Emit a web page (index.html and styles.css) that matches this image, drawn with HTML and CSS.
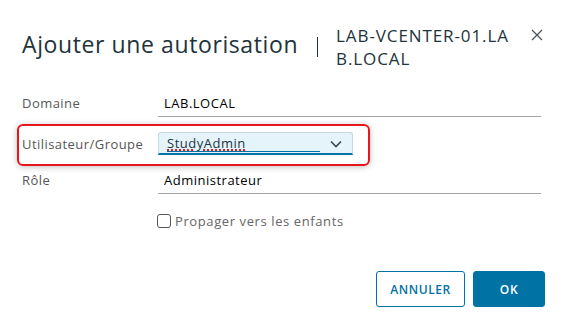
FILE: index.html
```html
<!DOCTYPE html>
<html lang="fr">
<head>
<meta charset="utf-8">
<title>Ajouter une autorisation</title>
<link rel="stylesheet" href="styles.css">
</head>
<body>
<div class="dialog">
  <div class="header">
    <h1 class="title">Ajouter une autorisation</h1>
    <span class="divider"></span>
    <div class="subtitle">LAB-VCENTER-01.LAB.LOCAL</div>
    <button class="close" aria-label="Fermer">
      <svg width="12" height="12" viewBox="0 0 12 12"><path d="M1 1L11 11M11 1L1 11" stroke="#4a5459" stroke-width="1.3" fill="none"/></svg>
    </button>
  </div>
  <div class="form">
    <div class="row row-domain">
      <label class="label">Domaine</label>
      <div class="input">LAB.LOCAL</div>
    </div>
    <div class="row row-user">
      <span class="highlight"></span>
      <label class="label label-mid">Utilisateur/Groupe</label>
      <div class="select">
        <span class="select-text"><span class="spell">StudyAdmin</span></span>
        <svg class="chevron" width="12" height="8" viewBox="0 0 12 8"><path d="M1 1.5L6 6.5L11 1.5" stroke="#3c474d" stroke-width="1.6" fill="none"/></svg>
      </div>
    </div>
    <div class="row row-role">
      <label class="label">Rôle</label>
      <div class="input">Administrateur</div>
    </div>
    <div class="check-row">
      <span class="checkbox"></span>
      <span class="check-label">Propager vers les enfants</span>
    </div>
  </div>
  <div class="footer">
    <button class="btn btn-outline">ANNULER</button>
    <button class="btn btn-primary">OK</button>
  </div>
</div>
</body>
</html>
```
FILE: styles.css
```css
html, body {
  margin: 0;
  padding: 0;
  background: #ffffff;
}
body {
  font-family: "Open Sans", "Noto Sans", sans-serif;
  color: #313131;
}
.dialog {
  width: 564px;
  height: 324px;
  box-sizing: border-box;
  padding: 0 19px 0 22px;
}
.header {
  display: flex;
  align-items: flex-start;
  padding-top: 24px;
  height: 71px;
  box-sizing: border-box;
}
.title {
  margin: 0;
  font-size: 23px;
  font-weight: 400;
  letter-spacing: 0.6px;
  line-height: 32px;
  margin-top: 4px;
  color: #21333b;
  white-space: nowrap;
}
.divider {
  width: 1px;
  height: 20px;
  background: #21333b;
  margin: 13px 18px 0 19px;
}
.subtitle {
  width: 180px;
  font-size: 17px;
  letter-spacing: 0.9px;
  line-height: 23px;
  color: #21333b;
  word-break: break-all;
}
.close {
  margin-left: auto;
  margin-top: 5px;
  margin-right: 2px;
  padding: 0;
  border: 0;
  background: none;
  width: 12px;
  height: 12px;
  display: flex;
}
.form {
  padding-top: 24px;
}
.row {
  position: relative;
  display: grid;
  grid-template-columns: 136px 1fr;
  align-items: start;
}
.label {
  font-size: 13px;
  letter-spacing: 0.45px;
  line-height: 16px;
  color: #565656;
}
.label-mid {
  align-self: center;
}
.input {
  height: 21px;
  border-bottom: 1px solid #a3a3a3;
  font-size: 13px;
  letter-spacing: 0.5px;
  color: #000;
  padding-left: 6px;
  margin-right: 4px;
  line-height: 16px;
}
.row-user {
  margin-top: 15px;
}
.row-role {
  margin-top: 17px;
}
.select {
  width: 195px;
  height: 23px;
  box-sizing: border-box;
  background: #e5f3fb;
  border: 1px solid #c6d7e1;
  border-bottom: 2px solid #0072a3;
  border-radius: 3px 3px 0 0;
  display: flex;
  align-items: center;
  padding-left: 8px;
  position: relative;
}
.select-text {
  width: 153px;
  border-bottom: 1px solid #0072a3;
  font-size: 13px;
  letter-spacing: 0.5px;
  line-height: 16px;
  color: #21333b;
}
.spell {
  text-decoration: underline dotted #e02020;
  text-decoration-thickness: 2px;
  text-underline-offset: 2px;
}
.chevron {
  position: absolute;
  right: 10px;
  top: 7px;
}
.highlight {
  position: absolute;
  left: -5px;
  top: -8px;
  width: 349px;
  height: 38px;
  border: 2px solid #e8161b;
  border-radius: 6px;
  box-shadow: 0 1px 6px rgba(0,0,0,0.25);
  pointer-events: none;
}
.check-row {
  display: flex;
  align-items: center;
  margin-top: 18px;
  margin-left: 135px;
}
.checkbox {
  width: 12px;
  height: 12px;
  border: 1px solid #565656;
  border-radius: 3px;
  margin-right: 4px;
}
.check-label {
  font-size: 13px;
  letter-spacing: 0.6px;
  color: #666;
}
.footer {
  display: flex;
  justify-content: flex-end;
  gap: 8px;
  margin-top: 41px;
}
.btn {
  height: 36px;
  font-family: "Open Sans", "Noto Sans", sans-serif;
  font-size: 12px;
  font-weight: 600;
  letter-spacing: 0.6px;
  border-radius: 3px;
  padding: 0;
}
.btn-outline {
  width: 89px;
  background: #fff;
  border: 1px solid #0072a3;
  color: #0072a3;
}
.btn-primary {
  width: 72px;
  background: #0072a3;
  border: 1px solid #0072a3;
  color: #fff;
}
```
